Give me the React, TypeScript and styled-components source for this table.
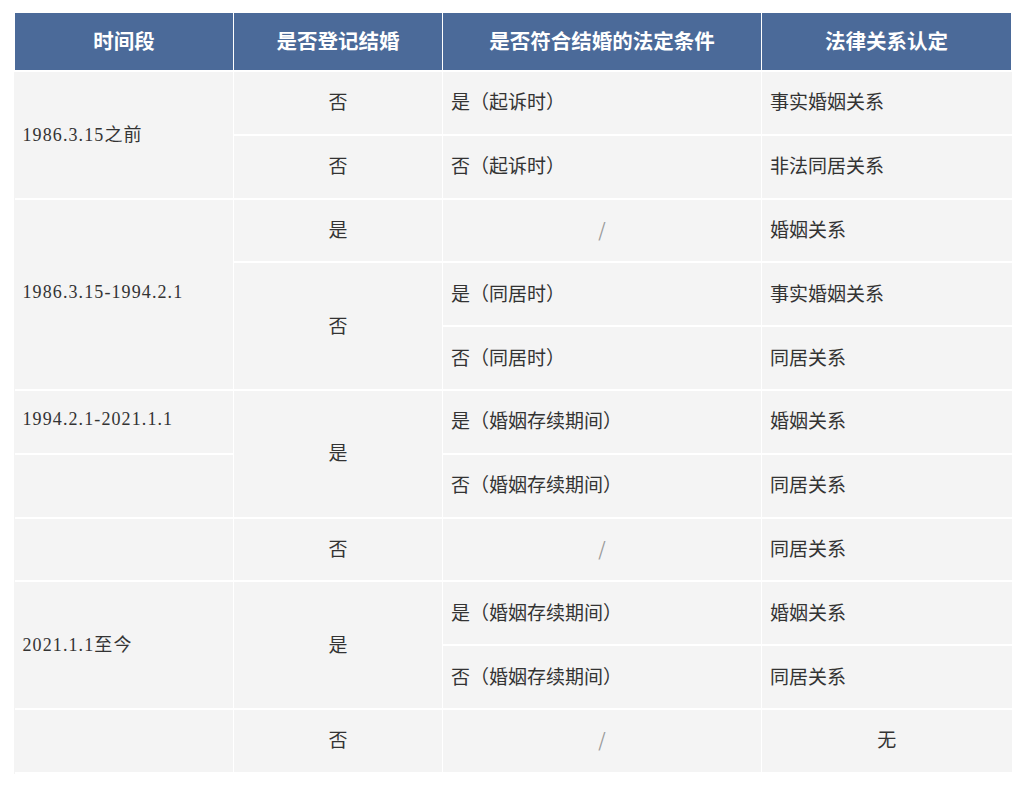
import React from "react";
import styled, { createGlobalStyle } from "styled-components";

const GlobalStyle = createGlobalStyle`
  html, body { margin: 0; padding: 0; background: #ffffff; }
  body { font-family: "Noto Sans CJK SC", "Noto Sans", sans-serif; }
`;

const Page = styled.div`
  padding: 13px 0 0 14px;
`;

const Table = styled.table`
  width: 997px;
  border-collapse: collapse;
  table-layout: fixed;
  background: #f4f4f4;
`;

const HeadCell = styled.th`
  height: 54px;
  padding: 0 0 3px 0;
  background: #4b6a99;
  color: #ffffff;
  font-family: "Noto Sans CJK SC", "Noto Sans", sans-serif;
  font-weight: 700;
  font-size: 20.5px;
  text-align: center;
  vertical-align: middle;
  border: 1.5px solid #ffffff;
  border-top: none;
`;

const Row = styled.tr`
  height: 63.8px;
`;

const Cell = styled.td<{ $align?: "left" | "center"; $serif?: boolean; $muted?: boolean }>`
  padding: 0 8px 4px 8px;
  background: #f4f4f4;
  color: ${(p) => (p.$muted ? "#9a9a9a" : "#333333")};
  font-family: ${(p) =>
    p.$serif
      ? `"Liberation Serif", "Noto Sans CJK SC", serif`
      : `"Noto Sans CJK SC", "Noto Sans", sans-serif`};
  font-size: ${(p) => (p.$serif ? "18px" : "19px")};
  letter-spacing: ${(p) => (p.$serif ? "1.1px" : "0")};
  text-align: ${(p) => p.$align ?? "left"};
  vertical-align: middle;
  border: 2px solid #ffffff;
  border-left-width: 1.5px;
  border-right-width: 1.5px;
  &:first-child { border-left: none; }
  &:last-child { border-right: none; }
`;

type C = { text: string; rs?: number; align?: "left" | "center"; serif?: boolean; muted?: boolean };

const rows: C[][] = [
  [
    { text: "1986.3.15之前", rs: 2, serif: true },
    { text: "否", align: "center" },
    { text: "是（起诉时）" },
    { text: "事实婚姻关系" },
  ],
  [{ text: "否", align: "center" }, { text: "否（起诉时）" }, { text: "非法同居关系" }],
  [
    { text: "1986.3.15-1994.2.1", rs: 3, serif: true },
    { text: "是", align: "center" },
    { text: "/", align: "center", muted: true },
    { text: "婚姻关系" },
  ],
  [{ text: "否", rs: 2, align: "center" }, { text: "是（同居时）" }, { text: "事实婚姻关系" }],
  [{ text: "否（同居时）" }, { text: "同居关系" }],
  [
    { text: "1994.2.1-2021.1.1", serif: true },
    { text: "是", rs: 2, align: "center" },
    { text: "是（婚姻存续期间）" },
    { text: "婚姻关系" },
  ],
  [{ text: "", serif: true }, { text: "否（婚姻存续期间）" }, { text: "同居关系" }],
  [
    { text: "", serif: true },
    { text: "否", align: "center" },
    { text: "/", align: "center", muted: true },
    { text: "同居关系" },
  ],
  [
    { text: "2021.1.1至今", rs: 2, serif: true },
    { text: "是", rs: 2, align: "center" },
    { text: "是（婚姻存续期间）" },
    { text: "婚姻关系" },
  ],
  [{ text: "否（婚姻存续期间）" }, { text: "同居关系" }],
  [
    { text: "", serif: true },
    { text: "否", align: "center" },
    { text: "/", align: "center", muted: true },
    { text: "无", align: "center" },
  ],
];

export default function App() {
  return (
    <Page>
      <GlobalStyle />
      <Table>
        <colgroup>
          <col style={{ width: 219 }} />
          <col style={{ width: 209 }} />
          <col style={{ width: 319 }} />
          <col style={{ width: 250 }} />
        </colgroup>
        <thead>
          <tr>
            <HeadCell>时间段</HeadCell>
            <HeadCell>是否登记结婚</HeadCell>
            <HeadCell>是否符合结婚的法定条件</HeadCell>
            <HeadCell>法律关系认定</HeadCell>
          </tr>
        </thead>
        <tbody>
          {rows.map((r, i) => (
            <Row key={i}>
              {r.map((c, j) => (
                <Cell key={j} rowSpan={c.rs} $align={c.align} $serif={c.serif} $muted={c.muted}>
                  {c.text}
                </Cell>
              ))}
            </Row>
          ))}
        </tbody>
      </Table>
    </Page>
  );
}
